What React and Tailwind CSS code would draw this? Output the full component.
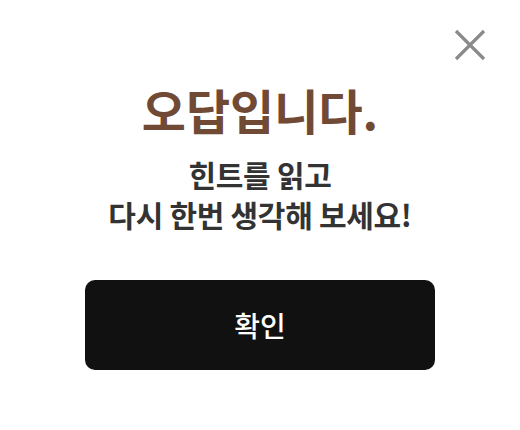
import React from 'react';

const font = { fontFamily: '"Noto Sans CJK KR", "Noto Sans", sans-serif' };

export default function App() {
  return (
    <div className="relative w-[520px] h-[430px] bg-white" style={font}>
      <button className="absolute right-[34px] top-[29px] w-[32px] h-[32px] flex items-center justify-center" aria-label="닫기">
        <svg width="32" height="32" viewBox="0 0 32 32" fill="none">
          <path d="M2 2L30 30M30 2L2 30" stroke="#8a8a8a" strokeWidth="3.2" />
        </svg>
      </button>
      <div className="flex flex-col items-center pt-[79px]">
        <h1 className="text-[48px] leading-[60px] font-bold text-[#714a36]">오답입니다.</h1>
        <p className="mt-[15px] text-[30px] leading-[40px] font-bold text-[#333333] text-center tracking-[-0.3px]">
          힌트를 읽고
          <br />
          다시 한번 생각해 보세요!
        </p>
        <button className="mt-[46px] w-[350px] h-[90px] rounded-[10px] bg-[#111111] text-white text-[28px] font-medium">
          확인
        </button>
      </div>
    </div>
  );
}
